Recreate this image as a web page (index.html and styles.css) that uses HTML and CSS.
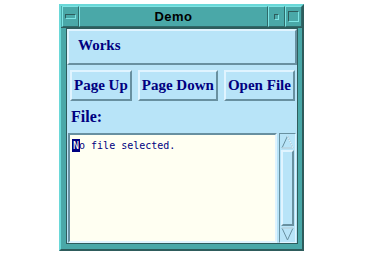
FILE: index.html
```html
<!DOCTYPE html>
<html lang="en">
<head>
    <meta charset="UTF-8">
    <title>Demo</title>
    <link rel="stylesheet" href="styles.css">
</head>
<body>
    <div class="window">
        <div class="titlebar">
            <div class="tb-btn"><span class="bar"></span></div>
            <div class="title">Demo</div>
            <div class="tb-btn"><span class="dot"></span></div>
            <div class="tb-btn"><span class="box"></span></div>
        </div>
        <div class="client">
            <div class="menubar">
                <span class="menu-item">Works</span>
            </div>
            <div class="buttons">
                <button class="btn">Page Up</button>
                <button class="btn">Page Down</button>
                <button class="btn">Open File</button>
            </div>
            <div class="label">File:</div>
            <div class="textbox">
                <div class="text"><span class="cursor">N</span>o file selected.</div>
                <div class="scrollbar">
                    <div class="arrow up">
                        <svg width="13" height="14" viewBox="0 0 13 14"><path d="M1 13 L6.5 1 L12 13 Z" fill="#b8e4f8" stroke="#6890a0"/><path d="M6.5 1 L12 13 L1 13" fill="none" stroke="#e0f4ff"/></svg>
                    </div>
                    <div class="thumb"></div>
                    <div class="arrow down">
                        <svg width="13" height="14" viewBox="0 0 13 14"><path d="M1 1 L6.5 13 L12 1 Z" fill="#b8e4f8" stroke="#6890a0"/><path d="M1 1 L12 1" fill="none" stroke="#e0f4ff"/></svg>
                    </div>
                </div>
            </div>
        </div>
    </div>
</body>
</html>
```
FILE: styles.css
```css
body {
    margin: 0;
    background-color: #fff;
}
.window {
    margin: 4px 0 0 59px;
    width: 241px;
    height: 243px;
    background-color: #4aa8a8;
    border: 2px solid;
    border-color: #6ad8d8 #2e5c5c #2e5c5c #6ad8d8;
    display: flex;
    flex-direction: column;
}
.titlebar {
    display: flex;
    height: 21px;
    border-bottom: 1px solid #2e5c5c;
}
.tb-btn {
    width: 15px;
    border: 1px solid;
    border-color: #7ee4e4 #2e6a6a #2e6a6a #7ee4e4;
    background-color: #4aa8a8;
    display: flex;
    align-items: center;
    justify-content: center;
}
.tb-btn:first-child {
    margin-left: 1px;
}
.tb-btn .bar {
    width: 9px;
    height: 3px;
    border: 1px solid;
    border-color: #2e5c5c #7ee4e4 #7ee4e4 #2e5c5c;
}
.tb-btn .dot {
    width: 3px;
    height: 4px;
    border: 1px solid;
    border-color: #2e5c5c #7ee4e4 #7ee4e4 #2e5c5c;
}
.tb-btn .box {
    width: 9px;
    height: 9px;
    border: 1px solid;
    border-color: #2e5c5c #7ee4e4 #7ee4e4 #2e5c5c;
}
.title {
    flex: 1;
    text-align: center;
    font-family: "Liberation Sans", sans-serif;
    font-weight: bold;
    font-size: 13px;
    line-height: 19px;
    letter-spacing: 0.5px;
    color: #000;
    border: 1px solid;
    border-color: #7ee4e4 #2e6a6a #2e6a6a #7ee4e4;
}
.client {
    flex: 1;
    margin: 0 4px 5px 5px;
    background-color: #b8e4f8;
    border: 1px solid #2e5c5c;
    display: flex;
    flex-direction: column;
    font-family: "Liberation Serif", serif;
    font-weight: bold;
    color: #000080;
}
.menubar {
    border: 2px solid;
    border-color: #e0f4ff #6890a0 #6890a0 #e0f4ff;
    display: flex;
    align-items: center;
    padding: 0 0 3px 9px;
    box-sizing: border-box;
    height: 36px;
    font-size: 15px;
}
.buttons {
    display: flex;
    gap: 6px;
    padding: 5px 2px 0 3px;
}
.btn {
    font-family: "Liberation Serif", serif;
    font-weight: bold;
    font-size: 15px;
    color: #000080;
    background-color: #b8e4f8;
    border: 2px solid;
    border-color: #e0f4ff #6890a0 #6890a0 #e0f4ff;
    padding: 0 2px;
    height: 31px;
    flex: none;
}
.btn:last-child {
    flex: 1;
}
.label {
    font-size: 16px;
    padding: 7px 0 0 4px;
    height: 25px;
}
.textbox {
    flex: 1;
    display: flex;
    margin: 0 1px 0 1px;
}
.text {
    flex: 1;
    background-color: #fffff2;
    font-family: "DejaVu Sans Mono", monospace;
    font-weight: normal;
    font-size: 10px;
    padding: 5px 3px;
    border: 2px solid;
    border-color: #6890a0 #e0f4ff #e0f4ff #6890a0;
}
.cursor {
    background-color: #000080;
    color: #fffff2;
    outline: 1px solid #000080;
}
.scrollbar {
    width: 15px;
    margin-left: 2px;
    display: flex;
    flex-direction: column;
    border: 1px solid;
    border-color: #6890a0 #e0f4ff #e0f4ff #6890a0;
}
.arrow {
    height: 16px;
    display: flex;
    align-items: center;
    justify-content: center;
}
.thumb {
    flex: 1;
    margin: 0 1px;
    border: 2px solid;
    border-color: #e0f4ff #6890a0 #6890a0 #e0f4ff;
}
```
